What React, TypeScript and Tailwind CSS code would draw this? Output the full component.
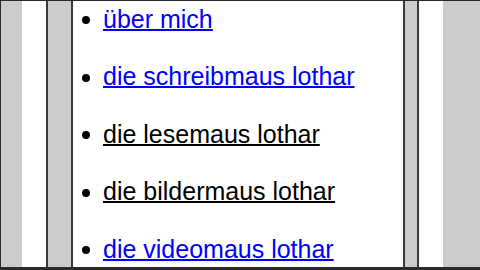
import React from "react";

interface MenuItem {
  label: string;
  visited: boolean;
}

const items: MenuItem[] = [
  { label: "über mich", visited: false },
  { label: "die schreibmaus lothar", visited: false },
  { label: "die lesemaus lothar", visited: true },
  { label: "die bildermaus lothar", visited: true },
  { label: "die videomaus lothar", visited: false },
];

export default function App() {
  return (
    <div
      className="flex h-[270px] w-[480px] overflow-hidden border-t border-l border-b-[3px] border-[#2a2a2a] bg-[#cccccc]"
      style={{ fontFamily: '"Liberation Sans", Arial, sans-serif' }}
    >
      {/* left margin */}
      <div className="w-[21px] shrink-0 bg-[#cccccc]" />
      <div className="w-[24px] shrink-0 bg-white" />

      {/* outer frame */}
      <div className="flex shrink-0 border-x-2 border-[#3a3a3a] bg-[#cccccc]">
        <div className="w-[23px] shrink-0" />
        {/* inner frame */}
        <div className="w-[334px] shrink-0 border-x-2 border-[#3a3a3a] bg-white">
          <ul className="-mt-[11px]">
            {items.map((item) => (
              <li key={item.label} className="flex h-[57.5px] items-center pl-[9px]">
                <span className="mt-[3px] h-[8px] w-[8px] shrink-0 rounded-full bg-black" />
                <a
                  href="#"
                  className={`ml-[13px] text-[25px] leading-[28px] whitespace-nowrap underline decoration-2 ${
                    item.visited ? "text-black" : "text-[#0000ff]"
                  }`}
                >
                  {item.label}
                </a>
              </li>
            ))}
          </ul>
        </div>
        <div className="w-[12px] shrink-0" />
      </div>

      {/* right margin */}
      <div className="w-[24px] shrink-0 bg-white" />
      <div className="flex-1 bg-[#cccccc]" />
    </div>
  );
}
